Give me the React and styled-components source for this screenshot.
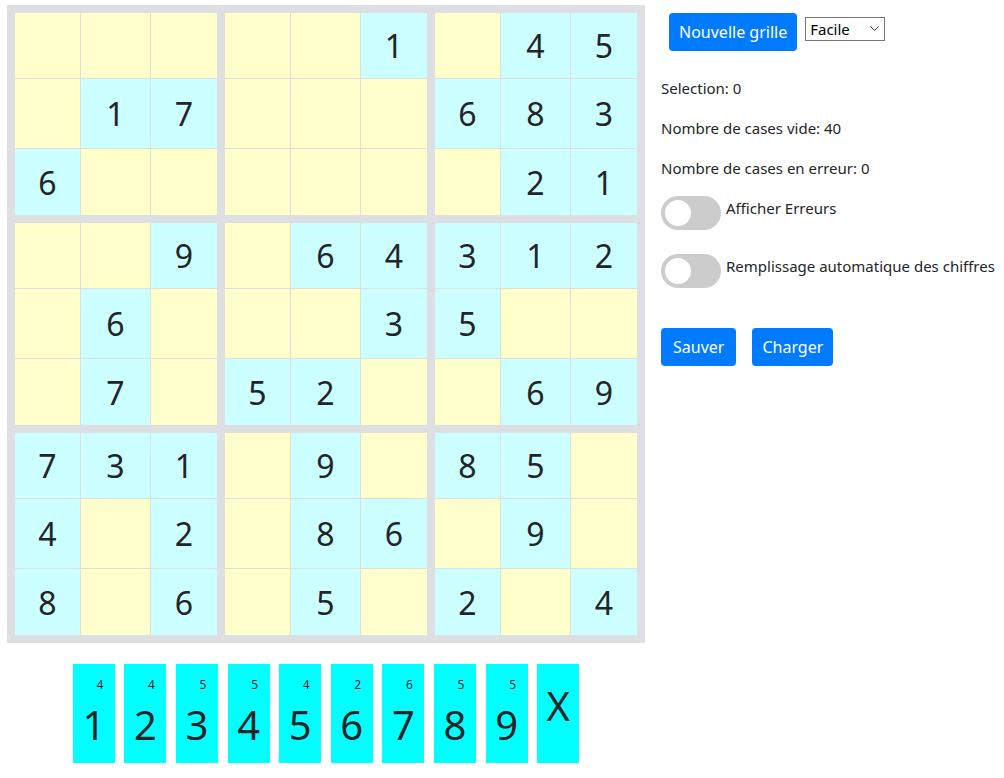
import React from 'react';
import styled, { createGlobalStyle } from 'styled-components';

const GlobalStyle = createGlobalStyle`
  body {
    margin: 0;
    font-family: "Noto Sans", "Open Sans", sans-serif;
    color: #212529;
    background: #fff;
  }
`;

const Page = styled.div`
  padding: 5px 0 0 7px;
`;

const Top = styled.div`
  display: flex;
  gap: 16px;
  align-items: flex-start;
`;

const Board = styled.div`
  display: grid;
  grid-template-columns: repeat(3, 202px);
  grid-template-rows: repeat(3, 202px);
  gap: 8px;
  padding: 8px;
  background: #dddfe3;
  width: fit-content;
`;

const Block = styled.div`
  display: grid;
  grid-template-columns: 65px 69px 66px;
  grid-template-rows: 65px 69px 66px;
  gap: 1px;
  background: #dedede;
`;

const Cell = styled.div`
  display: flex;
  align-items: center;
  justify-content: center;
  background: ${(p) => (p.$given ? '#ccffff' : '#ffffcc')};
  font-size: 32px;
  color: #212529;
`;

const Panel = styled.div`
  padding-top: 8px;
  font-size: 15px;
`;

const TopRow = styled.div`
  display: flex;
  align-items: flex-start;
  padding-left: 8px;
  gap: 8px;
`;

const Button = styled.button`
  background: #007bff;
  color: #fff;
  border: none;
  border-radius: 4px;
  height: 38px;
  padding: 0 ${(p) => p.$px || 11}px;
  font-family: inherit;
  font-size: 16px;
`;

const SelectWrap = styled.div`
  position: relative;
  margin-top: 4px;
  width: 80px;
  height: 24px;

  svg {
    position: absolute;
    right: 6px;
    top: 9px;
    pointer-events: none;
  }
`;

const Select = styled.select`
  appearance: none;
  width: 100%;
  height: 100%;
  box-sizing: border-box;
  padding: 0 0 0 4px;
  font-family: inherit;
  font-size: 15px;
  border: 1px solid #767676;
  border-radius: 0;
  background: #fff;
  color: #000;
`;

const Info = styled.p`
  margin: 0 0 16px;
  line-height: 24px;
  &:first-of-type {
    margin-top: 25px;
  }
`;

const ToggleRow = styled.label`
  display: flex;
  align-items: flex-start;
  gap: 5px;
  line-height: 24px;
  margin-bottom: ${(p) => p.$mb || 0}px;
`;

const Switch = styled.span`
  position: relative;
  flex: none;
  width: 60px;
  height: 34px;
  border-radius: 17px;
  background: #ccc;

  &::before {
    content: '';
    position: absolute;
    left: 4px;
    top: 4px;
    width: 26px;
    height: 26px;
    border-radius: 50%;
    background: #fff;
  }
`;

const Actions = styled.div`
  display: flex;
  gap: 16px;
`;

const Pad = styled.div`
  display: flex;
  justify-content: center;
  gap: 9.6px;
  width: 638px;
  margin-top: 21px;
`;

const PadKey = styled.div`
  width: 42px;
  height: 99px;
  box-sizing: border-box;
  padding-top: 12px;
  background: #00ffff;
  text-align: center;
  color: #212529;
`;

const Count = styled.div`
  font-size: 12px;
  line-height: 18px;
  padding-left: 12px;
`;

const Digit = styled.div`
  font-size: 40px;
  line-height: 62px;
  margin-top: ${(p) => (p.$alone ? -1 : 0)}px;
`;

const rows = [
  [0, 0, 0, 0, 0, 1, 0, 4, 5],
  [0, 1, 7, 0, 0, 0, 6, 8, 3],
  [6, 0, 0, 0, 0, 0, 0, 2, 1],
  [0, 0, 9, 0, 6, 4, 3, 1, 2],
  [0, 6, 0, 0, 0, 3, 5, 0, 0],
  [0, 7, 0, 5, 2, 0, 0, 6, 9],
  [7, 3, 1, 0, 9, 0, 8, 5, 0],
  [4, 0, 2, 0, 8, 6, 0, 9, 0],
  [8, 0, 6, 0, 5, 0, 2, 0, 4],
];

const counts = [4, 4, 5, 5, 4, 2, 6, 5, 5];

const blockCells = (b) => {
  const br = Math.floor(b / 3) * 3;
  const bc = (b % 3) * 3;
  const out = [];
  for (let r = 0; r < 3; r++) {
    for (let c = 0; c < 3; c++) {
      out.push(rows[br + r][bc + c]);
    }
  }
  return out;
};

export default function App() {
  return (
    <Page>
      <GlobalStyle />
      <Top>
        <Board>
          {[0, 1, 2, 3, 4, 5, 6, 7, 8].map((b) => (
            <Block key={b}>
              {blockCells(b).map((v, i) => (
                <Cell key={i} $given={v !== 0}>
                  {v !== 0 ? v : ''}
                </Cell>
              ))}
            </Block>
          ))}
        </Board>
        <Panel>
          <TopRow>
            <Button $px={10}>Nouvelle grille</Button>
            <SelectWrap>
              <Select defaultValue="facile">
                <option value="facile">Facile</option>
                <option value="moyen">Moyen</option>
                <option value="difficile">Difficile</option>
              </Select>
              <svg width="9" height="6" viewBox="0 0 9 6">
                <path d="M0.5 0.5 L4.5 4.5 L8.5 0.5" fill="none" stroke="#333" strokeWidth="1" />
              </svg>
            </SelectWrap>
          </TopRow>
          <Info>Selection: 0</Info>
          <Info>Nombre de cases vide: 40</Info>
          <Info>Nombre de cases en erreur: 0</Info>
          <ToggleRow $mb={24}>
            <Switch />
            Afficher Erreurs
          </ToggleRow>
          <ToggleRow $mb={40}>
            <Switch />
            Remplissage automatique des chiffres
          </ToggleRow>
          <Actions>
            <Button $px={12}>Sauver</Button>
            <Button $px={10}>Charger</Button>
          </Actions>
        </Panel>
      </Top>
      <Pad>
        {counts.map((n, i) => (
          <PadKey key={i}>
            <Count>{n}</Count>
            <Digit>{i + 1}</Digit>
          </PadKey>
        ))}
        <PadKey>
          <Digit $alone>X</Digit>
        </PadKey>
      </Pad>
    </Page>
  );
}
